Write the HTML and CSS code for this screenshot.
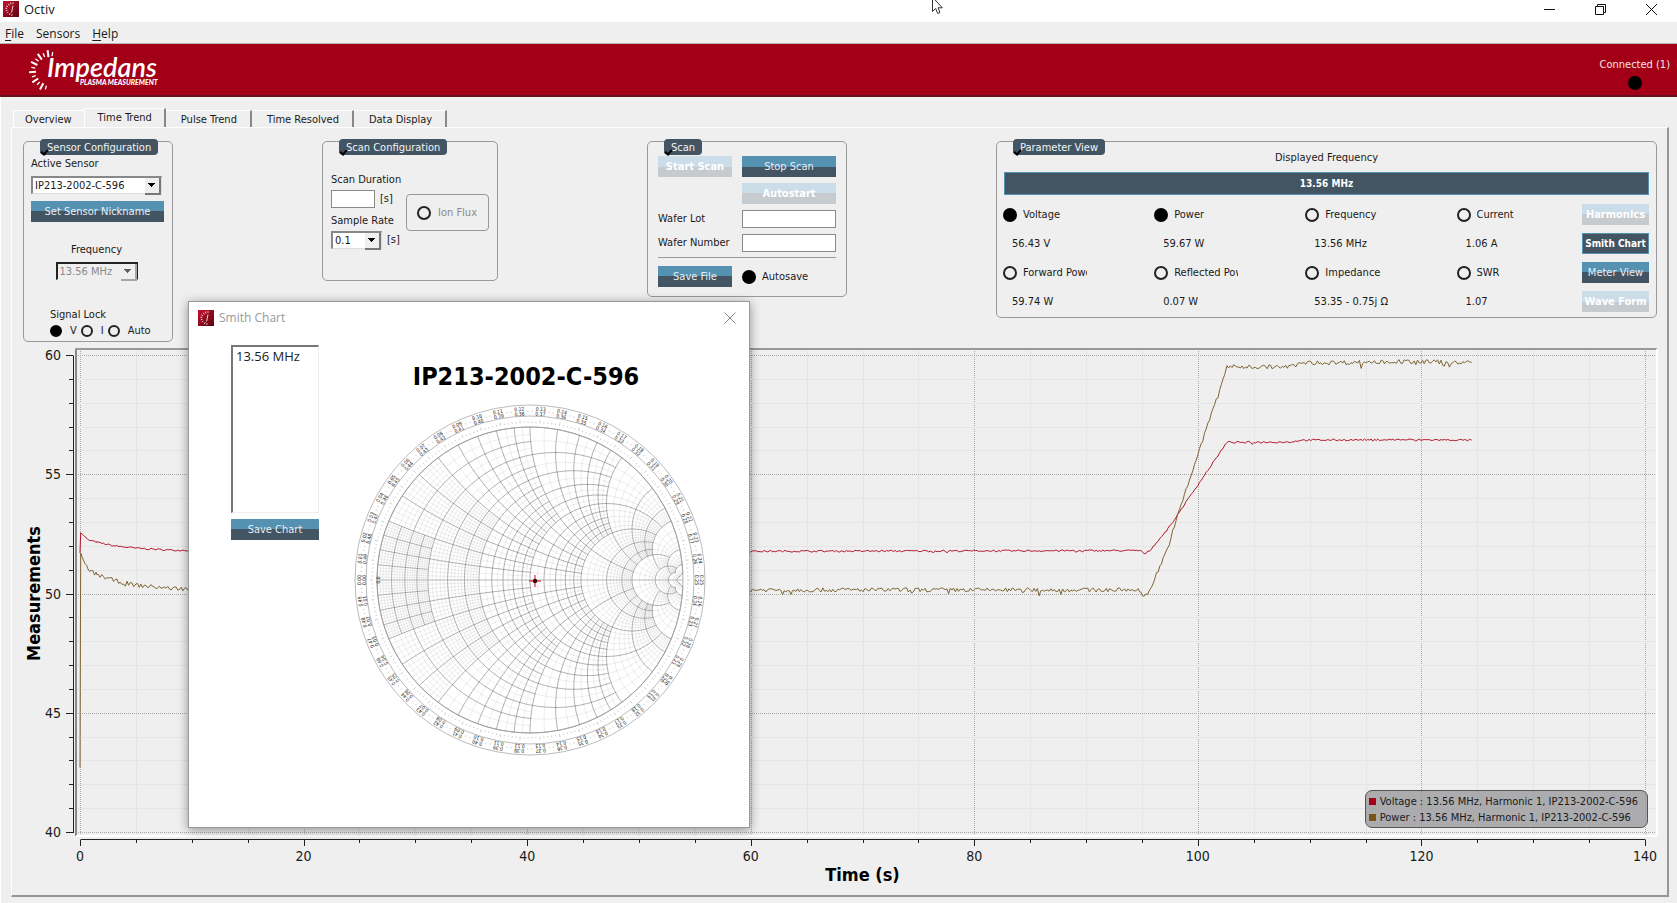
FILE: index.html
```html
<!DOCTYPE html>
<html lang="en">
<head>
<meta charset="utf-8">
<title>Octiv</title>
<link rel="stylesheet" href="styles.css">
</head>
<body>
<svg width="0" height="0" class="defs" aria-hidden="true">
  <defs>
    <linearGradient id="iconRed" x1="0" y1="0" x2="1" y2="1"><stop offset="0" stop-color="#c8102e"/><stop offset="1" stop-color="#5a0510"/></linearGradient>
    <symbol id="appIcon" viewBox="0 0 16 16">
      <rect width="16" height="16" fill="url(#iconRed)"/>
      <path d="M10 4.5L8.6 11.5M7.5 1.5l.4 2M5.2 2.8l1 1.6M3.2 4.8l1.7 1M2.4 7.3h1.8M2.8 9.8l1.6-.5M4 12.2l1.3-1.3M6.4 14l.7-1.7M8.8 14.8l.2-1.6M10 1.2v1.6" stroke="#f4d4d8" stroke-width="1" fill="none"/>
    </symbol>
  </defs>
</svg>

<header class="titlebar">
  <svg class="app-icon"><use href="#appIcon"/></svg>
  <span class="app-name">Octiv</span>
  <div class="window-buttons">
    <button type="button" aria-label="Minimize"><svg width="11" height="11"><path d="M0 5.5h11" stroke="#111"/></svg></button>
    <button type="button" aria-label="Restore"><svg width="11" height="11" fill="none" stroke="#111"><path d="M.5 2.5h8v8h-8zM2.5 2.5v-2h8v8h-2"/></svg></button>
    <button type="button" aria-label="Close"><svg width="11" height="11"><path d="M0 0l11 11M11 0L0 11" stroke="#111"/></svg></button>
  </div>
</header>
<svg class="cursor" width="12" height="16" aria-hidden="true"><path d="M.5-3v14.500l3.200-3 2 5 2.300-1-2-4.700h4.300z" fill="#fff" stroke="#333"/></svg>

<nav class="menubar">
  <a href="#file"><u>F</u>ile</a>
  <a href="#sensors">Sensors</a>
  <a href="#help"><u>H</u>elp</a>
</nav>

<div class="banner">
  <svg class="logo" width="140" height="48" role="img" aria-label="Impedans Plasma Measurement">
    <g stroke="#fff" id="rays"></g>
    <text class="logo-name" x="18" y="30">Impedans</text>
    <text class="logo-tag" x="51" y="38">PLASMA MEASUREMENT</text>
  </svg>
  <div class="connection"><span>Connected (1)</span><i class="lamp"></i></div>
</div>

<div class="workspace">
  <div class="tabs" role="tablist">
    <button role="tab" type="button">Overview</button>
    <button role="tab" type="button" class="active" aria-selected="true">Time Trend</button>
    <button role="tab" type="button">Pulse Trend</button>
    <button role="tab" type="button">Time Resolved</button>
    <button role="tab" type="button">Data Display</button>
  </div>

  <main class="page">
    <div class="panels">
      <fieldset class="panel sensor">
        <legend>Sensor Configuration</legend>
        <label for="sensor">Active Sensor</label>
        <span class="combo"><select id="sensor"><option>IP213-2002-C-596</option></select></span>
        <button type="button" class="btn">Set Sensor Nickname</button>
        <div class="frequency">
          <label for="freq">Frequency</label>
          <span class="combo disabled"><select id="freq" disabled><option>13.56 MHz</option></select></span>
        </div>
        <div class="signal">
          <span>Signal Lock</span>
          <div class="signal-row">
            <input type="radio" name="lock" id="lv" checked><label for="lv">V</label>
            <input type="radio" name="lock" id="li"><label for="li">I</label>
            <input type="radio" name="lock" id="la"><label for="la">Auto</label>
          </div>
        </div>
      </fieldset>

      <fieldset class="panel config">
        <legend>Scan Configuration</legend>
        <div class="config-fields">
          <label for="duration">Scan Duration</label>
          <div class="unit-row"><input type="text" class="field" id="duration"><span>[s]</span></div>
          <label for="rate">Sample Rate</label>
          <div class="unit-row rate"><span class="combo"><select id="rate"><option>0.1</option></select></span><span>[s]</span></div>
        </div>
        <div class="ion"><input type="checkbox" class="dot" id="ion" disabled><label for="ion">Ion Flux</label></div>
      </fieldset>

      <fieldset class="panel scan">
        <legend>Scan</legend>
        <div class="scan-grid">
          <button type="button" class="btn" disabled>Start Scan</button>
          <button type="button" class="btn">Stop Scan</button>
          <button type="button" class="btn second" disabled>Autostart</button>
          <label for="lot">Wafer Lot</label><input type="text" class="field" id="lot">
          <label for="num">Wafer Number</label><input type="text" class="field" id="num">
        </div>
        <hr>
        <div class="save-row">
          <button type="button" class="btn">Save File</button>
          <input type="checkbox" class="dot" id="autosave" checked><label for="autosave">Autosave</label>
        </div>
      </fieldset>

      <fieldset class="panel params">
        <legend>Parameter View</legend>
        <div class="shown-title">Displayed Frequency</div>
        <button type="button" class="shown-frequency">13.56 MHz</button>
        <div class="param-grid">
          <div class="param"><input type="checkbox" class="dot" id="p1" checked><label for="p1">Voltage</label></div>
          <div class="param"><input type="checkbox" class="dot" id="p2" checked><label for="p2">Power</label></div>
          <div class="param"><input type="checkbox" class="dot" id="p3"><label for="p3">Frequency</label></div>
          <div class="param"><input type="checkbox" class="dot" id="p4"><label for="p4">Current</label></div>
          <button type="button" class="btn" disabled>Harmonics</button>
          <output>56.43 V</output><output>59.67 W</output><output>13.56 MHz</output><output>1.06 A</output>
          <button type="button" class="btn pressed">Smith Chart</button>
          <div class="param"><input type="checkbox" class="dot" id="p5"><label for="p5">Forward Power</label></div>
          <div class="param"><input type="checkbox" class="dot" id="p6"><label for="p6">Reflected Power</label></div>
          <div class="param"><input type="checkbox" class="dot" id="p7"><label for="p7">Impedance</label></div>
          <div class="param"><input type="checkbox" class="dot" id="p8"><label for="p8">SWR</label></div>
          <button type="button" class="btn">Meter View</button>
          <output>59.74 W</output><output>0.07 W</output><output>53.35 - 0.75j Ω</output><output>1.07</output>
          <button type="button" class="btn" disabled>Wave Form</button>
        </div>
      </fieldset>
    </div>

    <div class="plot" id="plot">
      <svg id="trend" role="img" aria-label="Measurements over time"></svg>
      <div class="key">
        <div><i class="volt"></i>Voltage : 13.56 MHz, Harmonic 1, IP213-2002-C-596</div>
        <div><i class="pow"></i>Power : 13.56 MHz, Harmonic 1, IP213-2002-C-596</div>
      </div>
    </div>
  </main>
</div>

<section class="dialog" role="dialog" aria-label="Smith Chart">
  <header class="dialog-bar">
    <svg class="app-icon"><use href="#appIcon"/></svg>
    <span>Smith Chart</span>
    <button type="button" aria-label="Close"><svg width="12" height="12"><path d="M.5.5l11 11M11.500.5l-11 11" stroke="#888"/></svg></button>
  </header>
  <div class="dialog-body">
    <div class="dialog-side">
      <ul class="freq-list"><li>13.56 MHz</li></ul>
      <button type="button" class="btn">Save Chart</button>
    </div>
    <div class="dialog-chart">
      <h1>IP213-2002-C-596</h1>
      <svg id="smith" viewBox="-180 -181 360 360" role="img" aria-label="Smith chart"></svg>
    </div>
  </div>
</section>
<script src="app.js"></script>
</body>
</html>
```
FILE: styles.css
```css
* { box-sizing: border-box; }
body {
  margin: 0;
  min-height: 100vh;
  display: flex;
  flex-direction: column;
  background: #efefef;
  color: #1a1a1a;
  font: 11px/14px "DejaVu Sans Condensed", "DejaVu Sans", sans-serif;
  position: relative;
}
button, input, select { font: inherit; color: inherit; margin: 0; border-radius: 0; }
button { padding: 0; border: 0; background: none; white-space: nowrap; }
.defs { position: absolute; }
.app-icon { width: 16px; height: 16px; flex: none; }

.titlebar {
  display: flex;
  align-items: center;
  height: 22px;
  padding: 0 20px 4px 3px;
  gap: 5px;
  background: #fff;
  font: 12px/16px "Open Sans", "Noto Sans", sans-serif;
}
.app-name { font-size: 13px; }
.window-buttons { margin-left: auto; display: flex; gap: 40px; }
.window-buttons button { width: 11px; height: 11px; line-height: 0; }
.cursor { position: absolute; left: 932px; top: 0; }

.menubar {
  display: flex;
  gap: 12px;
  height: 22px;
  padding: 4px 5px 2px;
  border-bottom: 1px solid #b5b5b5;
  font: 12px/16px "Open Sans", "Noto Sans", sans-serif;
}
.menubar a { color: #1a1a1a; text-decoration: none; }
.menubar u { text-underline-offset: 2px; }

.banner {
  display: flex;
  justify-content: space-between;
  height: 53px;
  padding: 3px 7px 0 29px;
  background: #a30017;
  border-bottom: 2px solid #640f1c;
}
.logo { fill: #fff; }
.logo-name { font: italic 600 27px Lato, sans-serif; }
.logo-tag { font: italic 900 7px Lato, sans-serif; }
.connection { display: flex; flex-direction: column; align-items: center; gap: 4px; padding-top: 11px; color: #f6e4e6; }
.lamp { width: 14px; height: 14px; border-radius: 50%; background: #000; }

.workspace { flex: 1; display: flex; flex-direction: column; padding: 11px 8px 6px 10px; border-left: 1px solid #fff; }
.tabs { display: flex; align-items: flex-end; height: 19px; padding-left: 2px; }
.tabs button { height: 17px; padding: 2px 13px 0 15px; border-top: 1px solid #fff; border-right: 2px solid #888; }
.tabs button:first-child { padding: 2px 12px 0 11px; border-right: 0; border-left: 1px solid #fff; }
.tabs .active { height: 19px; padding: 0 12px 0 13px; border-left: 1px solid #fff; }
.page {
  flex: 1;
  display: flex;
  flex-direction: column;
  border: solid;
  border-width: 1px 2px 2px 1px;
  border-color: #fff #969696 #969696 #fff;
}

.panels { display: flex; align-items: flex-start; gap: 149px; padding: 13px 10px 0 11px; }
.panel { position: relative; flex: none; min-width: 0; margin: 0; padding: 0; border: 1px solid #999; border-radius: 5px; }
.panel legend {
  position: absolute;
  top: -3px;
  left: 16px;
  height: 16px;
  padding: 0 7px;
  border-radius: 4px;
  background: #435463;
  color: #f2f4f5;
  line-height: 17px;
  white-space: nowrap;
}
.panel legend::before {
  content: "";
  position: absolute;
  left: 1px;
  bottom: 1px;
  width: 5px;
  height: 3px;
  border: solid #000;
  border-width: 0 0 2px 2px;
  rotate: -50deg;
}
.btn {
  height: 21px;
  color: #e8eef2;
  background: linear-gradient(#5592b2 50%, #435463 50%);
}
.btn:disabled { color: #fff; font-weight: bold; background: linear-gradient(#cadde8 50%, #c6cbd0 50%); }
.btn.pressed { color: #fff; background: #435463; border: 1px solid #5592b2; font-weight: bold; font-size: 10px; }
.field { width: 100%; height: 18px; padding: 0 3px; border: 1px solid #8a8a8a; background: #fff; }
.combo { position: relative; display: block; height: 18px; border: solid; border-width: 2px 1px 1px 2px; border-color: #888 #ddd #ddd #888; background: #fff; }
.combo select { display: block; width: 100%; height: 15px; padding: 0 0 0 2px; border: 0; outline: 0; appearance: none; background: none; line-height: 14px; }
.combo::after {
  content: "";
  position: absolute;
  right: 0;
  top: 0;
  width: 14px;
  height: 15px;
  border: solid #777;
  border-width: 0 2px 2px 0;
  background: linear-gradient(#000, #000) 3px 5px / 7px 1px no-repeat, linear-gradient(#000, #000) 4px 6px / 5px 1px no-repeat, linear-gradient(#000, #000) 5px 7px / 3px 1px no-repeat, linear-gradient(#000, #000) 6px 8px / 1px 1px no-repeat, #efefef;
  pointer-events: none;
}
.combo.disabled { background: #efefef; border-color: #222 #222 #eee #222; }
.combo.disabled::after { opacity: .6; }
.combo select:disabled { color: #8a8a8a; opacity: 1; }
input[type="radio"], .dot {
  appearance: none;
  flex: none;
  width: 14px;
  height: 14px;
  border: 2px solid #222;
  border-radius: 50%;
}
input[type="radio"] { width: 12px; height: 12px; }
input[type="radio"]:checked, .dot:checked { background: #000; border-color: #000; }

.sensor { display: flex; flex-direction: column; width: 150px; padding: 15px 8px 3px 7px; }
.sensor > .combo { margin: 5px 2px 0 0; }
.sensor > .btn { margin-top: 7px; }
.frequency { display: flex; flex-direction: column; align-items: center; gap: 5px; margin-top: 21px; padding-right: 2px; }
.frequency .combo { width: 82px; }
.signal { margin-top: 28px; padding-left: 19px; }
.signal-row { display: flex; align-items: center; gap: 8px; margin-top: 2px; }
.signal-row input:not(:first-child) { margin-left: -4px; }

.config { display: flex; align-items: flex-start; justify-content: space-between; width: 176px; height: 140px; padding: 31px 8px 0; }
.config-fields { display: flex; flex-direction: column; gap: 3px; white-space: nowrap; }
.unit-row { display: flex; align-items: center; gap: 5px; }
.unit-row .field { width: 44px; }
.unit-row .combo { width: 51px; }
.unit-row + label { margin-top: 3px; }
.ion { display: flex; align-items: center; gap: 7px; height: 37px; margin: 21px 0 0 -30px; padding: 0 11px 0 10px; border: 1px solid #999; border-radius: 4px; color: #8a8a8a; white-space: nowrap; }

.scan { width: 200px; padding: 14px 10px 9px; }
.scan-grid { display: grid; grid-template-columns: 74px 1fr; gap: 6px 10px; align-items: center; }
.scan-grid label { white-space: nowrap; }
.second { grid-column: 2; }
.scan hr { margin: 5px 0 8px; border: 0; border-top: 1px solid #999; }
.save-row { display: flex; align-items: center; }
.save-row .btn { width: 74px; }
.save-row .dot { margin: 0 6px 0 10px; }

.params { flex: 1; padding: 9px 7px 5px 7px; }
.shown-title { text-align: center; }
.shown-frequency { display: block; width: 100%; height: 23px; margin: 7px 0 9px; background: #435463; border: 1px solid #5592b2; color: #fff; font-weight: bold; font-size: 10px; }
.param-grid { display: grid; grid-template-columns: 17fr 17fr 17fr 14fr 67px; row-gap: 8px; align-items: center; }
.param { display: flex; align-items: center; gap: 6px; margin-left: -1px; }
.param label { width: 64px; overflow: hidden; white-space: nowrap; }
.param-grid output { padding-left: 8px; }

.plot { position: relative; flex: 1; min-height: 400px; }
#trend { position: absolute; inset: 0; width: 100%; height: 100%; }
.tick-text { font-size: 14px; fill: #1a1a1a; }
.axis-title { font-weight: bold; font-size: 18px; fill: #000; }
.key {
  position: absolute;
  right: 19px;
  bottom: 67px;
  padding: 3px 9px 1px 3px;
  border: 1px solid #555;
  border-radius: 7px;
  background: rgba(150, 150, 152, .75);
  line-height: 16px;
  white-space: nowrap;
}
.key i { display: inline-block; width: 7px; height: 7px; margin-right: 4px; }
.volt { background: #a30017; }
.pow { background: #7a5519; }

.dialog {
  position: absolute;
  left: 188px;
  top: 301px;
  width: 562px;
  height: 527px;
  border: 1px solid #999;
  background: #fff;
  box-shadow: 0 2px 10px rgba(0, 0, 0, .4);
}
.dialog-bar { display: flex; align-items: center; gap: 5px; height: 31px; padding: 0 13px 0 9px; color: #9a9a9a; font: 12px/16px "Open Sans", "Noto Sans", sans-serif; }
.dialog-bar button { margin-left: auto; line-height: 0; }
.dialog-body { display: flex; gap: 31px; padding: 12px 0 0 42px; }
.dialog-side { width: 88px; display: flex; flex-direction: column; gap: 6px; }
.freq-list { height: 168px; margin: 0; padding: 1px 3px; list-style: none; border: solid; border-width: 2px 1px 1px 2px; border-color: #777 #eee #eee #777; font: 13px/16px "Open Sans", "Noto Sans", sans-serif; }
.dialog-chart { width: 360px; }
.dialog-chart h1 { margin: 19px 8px 9px 0; font-size: 25px; line-height: 26px; text-align: center; color: #000; }
#smith { display: block; width: 100%; }
.scale-text { font-size: 5px; fill: #222; text-anchor: middle; }
```
FILE: app.js
```js
var NS = 'http://www.w3.org/2000/svg';
function add(parent, tag, attrs, text) {
  var e = document.createElementNS(NS, tag);
  for (var k in attrs) e.setAttribute(k, attrs[k]);
  if (text !== undefined) e.textContent = text;
  parent.appendChild(e);
  return e;
}

/* Logo rays */
(function () {
  var g = document.getElementById('rays');
  for (var i = 0; i < 13; i++) {
    var a = (82 + i * 14.5) * Math.PI / 180, long = i % 2 === 1;
    var r0 = long ? 14 : 15, r1 = long ? 21 : 19;
    add(g, 'line', {
      x1: 21 + r0 * Math.cos(a), y1: 24 - r0 * Math.sin(a),
      x2: 21 + r1 * Math.cos(a), y2: 24 - r1 * Math.sin(a),
      'stroke-width': long ? 2 : 1.3
    });
  }
})();

/* Measurement series */
var seed = 7;
function rnd() { seed = (seed * 16807) % 2147483647; return seed / 2147483647 - 0.5; }
function series(keys, noise) {
  var out = [];
  for (var i = 0; i < keys.length - 1; i++) {
    var a = keys[i], b = keys[i + 1];
    for (var t = a[0]; t < b[0] - 0.05; t += 0.15) {
      var v = a[1] + (b[1] - a[1]) * (t - a[0]) / (b[0] - a[0]);
      var n = rnd();
      var spike = rnd() > 0.47 ? -noise : 0;
      out.push([t, t < 0.5 ? v : v + n * noise + spike]);
    }
  }
  out.push(keys[keys.length - 1]);
  return out;
}
var voltage = series([[0, 51.7], [0.06, 52.55], [0.3, 52.45], [0.7, 52.25], [1.5, 52.15], [3, 52], [5, 51.9], [8, 51.82], [12, 51.8], [60, 51.77], [94.9, 51.8], [95.2, 51.65], [95.7, 51.8], [97.3, 52.7], [102.6, 56.34], [108.3, 56.35], [109.2, 56.43], [118, 56.45], [124.5, 56.43]], 0.07);
var power = series([[0, 42.7], [0.06, 51.7], [0.3, 51.4], [0.7, 51], [1.5, 50.8], [3, 50.55], [5, 50.35], [8, 50.22], [12, 50.15], [60, 50.15], [94.9, 50.15], [95.2, 49.85], [95.7, 50.15], [97.3, 51.9], [98.5, 53.7], [102.6, 59.5], [108.3, 59.5], [109.2, 59.66], [118, 59.72], [124.5, 59.7]], 0.18);

function drawTrend() {
  var svg = document.getElementById('trend');
  var W = svg.clientWidth, H = svg.clientHeight;
  svg.textContent = '';
  var x0 = 68, x1 = W - 22, y60 = 13, y40 = H - 63, L = 64, R = W - 10, T = 7, B = H - 59;
  function X(v) { return x0 + (x1 - x0) * v / 140; }
  function Y(v) { return y40 + (y60 - y40) * (v - 40) / 20; }
  function P(v) { return Math.round(v) + 0.5; }
  function line(a, b, c, d, col, extra) {
    var o = { x1: a, y1: b, x2: c, y2: d, stroke: col };
    for (var k in extra) o[k] = extra[k];
    add(svg, 'line', o);
  }
  var dots = { 'stroke-dasharray': '1 1' }, v, major;
  for (v = 0; v <= 140; v += 5) {
    major = v % 20 === 0;
    line(P(X(v)), T, P(X(v)), B, major ? '#aaa' : '#e5e5e5', major ? dots : {});
    line(P(X(v)), H - 55, P(X(v)), H - (major ? 49 : 52), '#222');
    if (major) add(svg, 'text', { x: X(v), y: H - 34, 'class': 'tick-text', 'text-anchor': 'middle' }, v);
  }
  for (v = 40; v <= 60; v++) {
    major = v % 5 === 0;
    line(L, P(Y(v)), R, P(Y(v)), major ? '#aaa' : '#e5e5e5', major ? dots : {});
    line(major ? 54 : 57, P(Y(v)), 61, P(Y(v)), '#222');
    if (major) add(svg, 'text', { x: 49, y: Y(v) + 5, 'class': 'tick-text', 'text-anchor': 'end' }, v);
  }
  line(61.5, P(Y(60)), 61.5, P(Y(40)) + .5, '#222');
  line(P(X(0)), H - 55.5, P(X(140)), H - 55.5, '#222');
  line(L, T, L, B, '#888', { 'stroke-width': 2 });
  line(L - 1, T, R, T, '#999', { 'stroke-width': 2 });
  line(L, B, R, B, '#fff', { 'stroke-width': 2 });
  line(R, T, R, B, '#fff', { 'stroke-width': 2 });
  function curve(data, col) {
    add(svg, 'polyline', {
      points: data.map(function (p) { return X(p[0]).toFixed(1) + ',' + Y(p[1]).toFixed(1); }).join(' '),
      fill: 'none', stroke: col, 'stroke-width': 1
    });
  }
  curve(voltage, '#b3142c');
  curve(power, '#7d6433');
  add(svg, 'text', { x: (x0 + x1) / 2, y: H - 14, 'class': 'axis-title', 'text-anchor': 'middle' }, 'Time (s)');
  var cy = (y60 + y40) / 2;
  add(svg, 'text', { x: 28, y: cy, transform: 'rotate(-90 28 ' + cy + ')', 'class': 'axis-title', 'text-anchor': 'middle' }, 'Measurements');
}
drawTrend();
window.addEventListener('resize', drawTrend);

/* Smith chart */
(function () {
  var svg = document.getElementById('smith'), RAD = 153;
  function pt(r, x) {
    var d = (r + 1) * (r + 1) + x * x;
    return ((r * r - 1 + x * x) / d * RAD).toFixed(2) + ' ' + (-2 * x / d * RAD).toFixed(2);
  }
  function seg(fixed, from, to, isR) {
    var s = '', t = '', n = 16;
    for (var i = 0; i <= n; i++) {
      var v = from + (to - from) * i / n, c = i ? 'L' : 'M';
      s += c + (isR ? pt(fixed, v) : pt(v, fixed));
      t += c + (isR ? pt(fixed, -v) : pt(v, -fixed));
    }
    return s + t;
  }
  var limits = [0, 0.2, 0.5, 1, 2, 5, 10, 20, 50];
  function grid(steps) {
    var d = '';
    for (var b = 0; b < steps.length; b++) {
      var lo = limits[b], hi = limits[b + 1], st = steps[b];
      for (var k = 0; k * st <= hi + 1e-9; k++) {
        var v = k * st, start = v <= lo + 1e-9 ? lo : 0;
        d += seg(v, start, hi, true);
        if (v > 0) d += seg(v, start, hi, false);
      }
    }
    return d;
  }
  add(svg, 'path', { d: grid([0.01, 0.02, 0.05, 0.1, 0.2, 1, 2, 10]), fill: 'none', stroke: '#000', 'stroke-opacity': 0.14, 'stroke-width': 0.5 });
  add(svg, 'path', { d: grid([0.05, 0.1, 0.1, 0.2, 1, 5, 10, 50]), fill: 'none', stroke: '#000', 'stroke-opacity': 0.3, 'stroke-width': 0.8 });
  [[175, '#aaa'], [164, '#aaa'], [153, '#999']].forEach(function (c) {
    add(svg, 'circle', { r: c[0], fill: 'none', stroke: c[1], 'stroke-width': 0.8 });
  });
  add(svg, 'line', { x1: -RAD, y1: 0, x2: RAD, y2: 0, stroke: '#999', 'stroke-width': 0.7 });
  var ticks = '';
  for (var i = 0; i < 250; i++) {
    var a = i / 250 * 2 * Math.PI, c = Math.cos(a), s = Math.sin(a);
    ticks += 'M' + 168 * c + ' ' + 168 * s + 'L' + 169.5 * c + ' ' + 169.5 * s;
    var q = i % 5 ? 158.5 : 160;
    ticks += 'M' + 157 * c + ' ' + 157 * s + 'L' + q * c + ' ' + q * s;
  }
  add(svg, 'path', { d: ticks, stroke: '#999', 'stroke-width': 0.5 });
  for (i = 0; i < 50; i++) {
    var deg = -90 + i * 7.2;
    add(svg, 'text', { y: -169.5, transform: 'rotate(' + deg + ')', 'class': 'scale-text' }, (i / 100).toFixed(2));
    add(svg, 'text', { y: -164.5, transform: 'rotate(' + deg + ')', 'class': 'scale-text' }, ((50 - i) % 50 / 100).toFixed(2));
  }
  add(svg, 'text', { y: -150, transform: 'rotate(-90)', 'class': 'scale-text' }, '0.0');
  add(svg, 'path', { d: 'M-1 1H11M5-5V7', stroke: '#e04050', 'stroke-width': 1.3 });
  add(svg, 'circle', { cx: 5, cy: 1, r: 2.2, fill: '#3a0008' });
})();
```
